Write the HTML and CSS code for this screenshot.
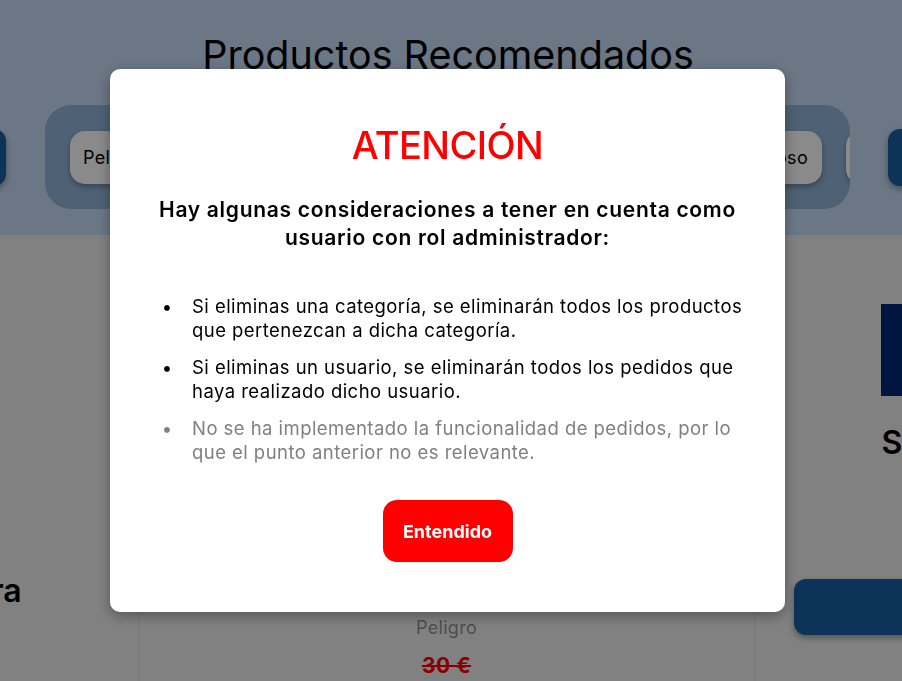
FILE: index.html
```html
<!DOCTYPE html>
<html lang="es">
<head>
<meta charset="utf-8">
<title>Productos Recomendados</title>
<link rel="stylesheet" href="styles.css">
</head>
<body>
<div class="page">
  <section class="hero">
    <h1 class="hero-title">Productos Recomendados</h1>
    <div class="carousel">
      <button class="nav-btn nav-prev" aria-label="Anterior"></button>
      <div class="cat-panel">
        <div class="cat-track">
          <span class="chip">Peligro</span>
          <span class="chip">Terror</span>
          <span class="chip">Aventura</span>
          <span class="chip">Misterioso</span>
        </div>
        <span class="chip">Romance</span>
      </div>
      <button class="nav-btn nav-next" aria-label="Siguiente"></button>
    </div>
  </section>

  <section class="products">
    <article class="card card-first">
      <h3 class="card-title">La Gran Aventura</h3>
    </article>
    <article class="card card-middle">
      <div class="card-img card-img-tall"></div>
      <h3 class="card-title">Peligro Extremo</h3>
      <p class="card-cat">Peligro</p>
      <p class="card-old-price">30 €</p>
    </article>
    <article class="card card-last">
      <div class="card-img"></div>
      <h3 class="card-title card-title-last">Sombras</h3>
      <button class="card-btn">Añadir al carrito</button>
    </article>
  </section>
</div>

<div class="overlay">
  <div class="modal" role="dialog" aria-modal="true">
    <h2 class="modal-title">ATENCIÓN</h2>
    <p class="modal-lead">Hay algunas consideraciones a tener en cuenta como usuario con rol administrador:</p>
    <ul class="modal-list">
      <li>Si eliminas una categoría, se eliminarán todos los productos que pertenezcan a dicha categoría.</li>
      <li>Si eliminas un usuario, se eliminarán todos los pedidos que haya realizado dicho usuario.</li>
      <li class="muted">No se ha implementado la funcionalidad de pedidos, por lo que el punto anterior no es relevante.</li>
    </ul>
    <button class="modal-btn">Entendido</button>
  </div>
</div>
</body>
</html>
```

FILE: styles.css
```css
* { box-sizing: border-box; }

html, body {
  margin: 0;
  padding: 0;
  height: 100%;
  overflow: hidden;
}

body {
  font-family: Inter, "Noto Sans", "Liberation Sans", sans-serif;
  background: #eeeeee;
  color: #000;
}

.page {
  width: 100%;
  height: 100%;
  overflow: hidden;
}

/* ---------- hero ---------- */
.hero {
  height: 235px;
  background: #c6dcf5;
  padding: 31px 6px 0 0;
  overflow: hidden;
}

.hero-title {
  margin: 0 0 26px;
  font-size: 39.5px;
  line-height: 48px;
  font-weight: 400;
  text-align: center;
}

.carousel {
  display: flex;
  align-items: center;
  margin-left: -44px;
  width: 1000px;
}

.nav-btn {
  flex: none;
  width: 50px;
  height: 57px;
  border: none;
  border-radius: 12px;
  background: #1a5ea3;
  box-shadow: 0 3px 6px rgba(0,0,0,.35);
  padding: 0;
}

.cat-panel {
  flex: none;
  margin: 0 38px 0 39px;
  width: 805px;
  height: 104px;
  padding: 0 0 0 25px;
  border-radius: 26px;
  background: #92b5d9;
  display: flex;
  align-items: center;
  gap: 24px;
  overflow: hidden;
}

.cat-track {
  flex: none;
  width: 752px;
  display: flex;
  justify-content: space-between;
}

.chip {
  flex: none;
  height: 53px;
  line-height: 53px;
  padding: 0 14px 0 13px;
  font-size: 18px;
  letter-spacing: 0.3px;
  background: #ffffff;
  border-radius: 15px;
  box-shadow: 0 3px 6px rgba(0,0,0,.3);
}

/* ---------- products ---------- */
.products {
  display: flex;
  margin-left: -477px;
  height: 446px;
}

.card {
  flex: none;
  width: 616px;
  border-right: 1px solid #dddddd;
  display: flex;
  flex-direction: column;
  align-items: center;
}

.card-title {
  margin: 0;
  font-size: 32px;
  line-height: 38px;
  font-weight: 600;
  text-align: center;
}

.card-first { padding-top: 337px; padding-left: 116px; }

.card-middle { padding-top: 69px; }

.card-img {
  width: 364px;
  height: 92px;
  background: #002976;
}

.card-img-tall { height: 200px; }

.card-middle .card-title { margin-top: 30px; }

.card-cat {
  margin: 44px 0 0;
  font-size: 18px;
  line-height: 24px;
  letter-spacing: 0.3px;
  color: #8e8e8e;
}

.card-old-price {
  margin: 14px 0 0;
  font-size: 21px;
  line-height: 24px;
  font-weight: 700;
  letter-spacing: 0.5px;
  color: #ff0000;
  text-decoration: line-through;
}

.card-last { padding-top: 69px; }

.card-title-last { margin-top: 28px; width: 362px; text-align: left; }

.card-btn {
  margin-top: 117px;
  width: 538px;
  height: 56px;
  border: none;
  border-radius: 12px;
  background: #1a5ea3;
  color: #fff;
  font-size: 18px;
  box-shadow: 0 3px 6px rgba(0,0,0,.35);
}

/* ---------- modal ---------- */
.overlay {
  position: fixed;
  inset: 0;
  background: rgba(0,0,0,.46);
  display: flex;
  align-items: center;
  justify-content: center;
  padding-right: 7px;
}

.modal {
  width: 675px;
  background: #ffffff;
  border-radius: 10px;
  padding: 12px 40px 50px;
  box-shadow: 0 4px 14px rgba(0,0,0,.35);
  display: flex;
  flex-direction: column;
  align-items: center;
}

.modal-title {
  margin: 41px 0 0;
  font-size: 38px;
  line-height: 46px;
  font-weight: 500;
  letter-spacing: -0.6px;
  color: #ff0000;
}

.modal-lead {
  margin: 28px 0 0;
  font-size: 21px;
  line-height: 28px;
  font-weight: 600;
  letter-spacing: 0.7px;
  text-align: center;
}

.modal-list {
  align-self: stretch;
  margin: 43px -2px 0 0;
  padding-left: 42px;
  font-size: 18.5px;
  line-height: 23.5px;
  letter-spacing: 0.45px;
}

.modal-list li::marker {
  content: "•\00a0\00a0\00a0\00a0";
  letter-spacing: 0;
}

.modal-list li + li { margin-top: 14px; }

.modal-list .muted { color: #808080; }

.modal-btn {
  margin-top: 36px;
  width: 130px;
  height: 62px;
  border: none;
  border-radius: 14px;
  background: #ff0000;
  color: #ffffff;
  font-family: inherit;
  font-size: 18px;
  font-weight: 700;
}
```
